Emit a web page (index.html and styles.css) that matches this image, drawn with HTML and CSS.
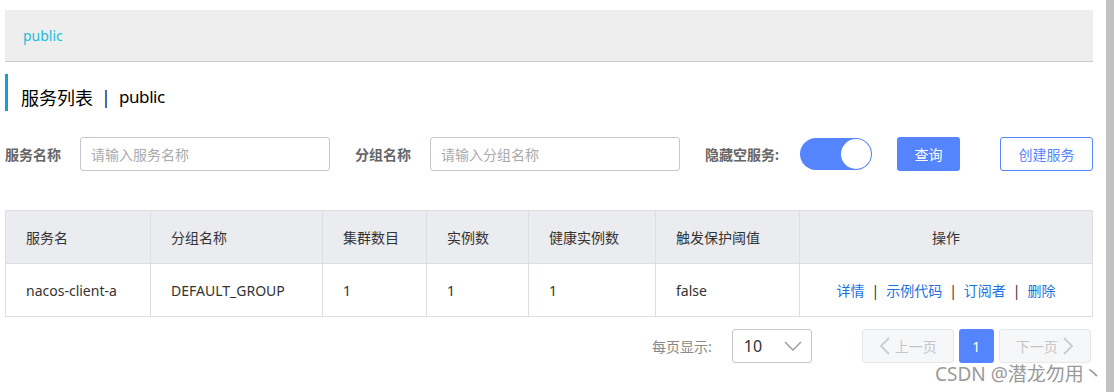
FILE: index.html
```html
<!DOCTYPE html>
<html lang="zh-CN">
<head>
    <meta charset="UTF-8">
    <title>服务列表</title>
    <link rel="stylesheet" href="styles.css">
</head>
<body>
    <div class="page">
        <!-- 命名空间 -->
        <div class="ns-bar">
            <span class="ns-name">public</span>
        </div>

        <h2 class="page-title">服务列表 <span class="sep">|</span> <span class="title-ns">public</span></h2>

        <!-- 查询条件 -->
        <div class="search-row">
            <label class="field-label">服务名称</label>
            <input class="text-input" type="text" placeholder="请输入服务名称">
            <label class="field-label">分组名称</label>
            <input class="text-input" type="text" placeholder="请输入分组名称">
            <label class="field-label switch-label">隐藏空服务:</label>
            <span class="switch"><span class="knob"></span></span>
            <button class="btn btn-primary">查询</button>
            <span class="spacer"></span>
            <button class="btn btn-outline">创建服务</button>
        </div>

        <!-- 服务表格 -->
        <table class="service-table">
            <thead>
                <tr>
                    <th class="c1">服务名</th>
                    <th class="c2">分组名称</th>
                    <th class="c3">集群数目</th>
                    <th class="c4">实例数</th>
                    <th class="c5">健康实例数</th>
                    <th class="c6">触发保护阈值</th>
                    <th class="c7 center">操作</th>
                </tr>
            </thead>
            <tbody>
                <tr>
                    <td>nacos-client-a</td>
                    <td>DEFAULT_GROUP</td>
                    <td>1</td>
                    <td>1</td>
                    <td>1</td>
                    <td>false</td>
                    <td class="center ops">
                        <a href="#">详情</a><span class="bar">|</span><a href="#">示例代码</a><span class="bar">|</span><a href="#">订阅者</a><span class="bar">|</span><a href="#">删除</a>
                    </td>
                </tr>
            </tbody>
        </table>

        <!-- 分页 -->
        <div class="pager">
            <span class="pager-label">每页显示:</span>
            <div class="page-size">
                <span>10</span>
                <svg width="18" height="11" viewBox="0 0 18 11"><path d="M1 1 L9 9 L17 1" fill="none" stroke="#999" stroke-width="1.4"/></svg>
            </div>
            <div class="pages">
                <button class="pg pg-wide" disabled>
                    <svg width="11" height="18" viewBox="0 0 11 18"><path d="M10 1 L2 9 L10 17" fill="none" stroke="#ccc" stroke-width="1.8"/></svg>
                    上一页
                </button>
                <button class="pg pg-current">1</button>
                <button class="pg pg-wide" disabled>
                    下一页
                    <svg width="11" height="18" viewBox="0 0 11 18"><path d="M1 1 L9 9 L1 17" fill="none" stroke="#ccc" stroke-width="1.8"/></svg>
                </button>
            </div>
        </div>

        <div class="watermark">CSDN @潜龙勿用丶</div>
    </div>

    <div class="scrollbar"></div>
</body>
</html>
```

FILE: styles.css
```css
body {
    margin: 0;
    padding: 0;
    font-family: "Noto Sans", "Noto Sans CJK SC", sans-serif;
    font-size: 14px;
    color: #333;
    background: #fff;
    overflow: hidden;
}

.page {
    width: 1088px;
    padding: 10px 0 0 5px;
}

.ns-bar {
    height: 51px;
    background: #eeeeee;
    border-bottom: 1px solid #cccccc;
    display: flex;
    align-items: center;
    padding-left: 18px;
}

.ns-name {
    color: #1fbcd8;
    font-size: 14px;
}

.page-title {
    margin: 12px 0 0 0;
    height: 37px;
    border-left: 3px solid #1a9bd3;
    padding-left: 13px;
    font-size: 18px;
    font-weight: normal;
    color: #000;
    display: flex;
    align-items: center;
    padding-top: 8px;
    box-sizing: border-box;
}

.page-title .sep {
    margin: 0 8px 0 8px;
    color: #222;
}

.title-ns {
    font-size: 17px;
    letter-spacing: -0.4px;
}

.search-row {
    margin-top: 26px;
    height: 34px;
    display: flex;
    align-items: center;
}

.field-label {
    font-weight: bold;
    color: #666;
    font-size: 14px;
    margin-right: 19px;
}

.switch-label {
    margin-right: 21px;
}

.text-input {
    width: 250px;
    height: 34px;
    box-sizing: border-box;
    border: 1px solid #c4c6cf;
    border-radius: 3px;
    padding: 0 10px;
    font-family: inherit;
    font-size: 14px;
    margin-right: 25px;
    outline: none;
}

.text-input::placeholder {
    color: #aaa;
}

.switch {
    width: 72px;
    height: 32px;
    border-radius: 16px;
    background: #5584ff;
    position: relative;
    margin-right: 25px;
}

.knob {
    position: absolute;
    right: 1px;
    top: 1px;
    width: 30px;
    height: 30px;
    border-radius: 50%;
    background: #fff;
}

.btn {
    height: 34px;
    border-radius: 3px;
    font-family: inherit;
    font-size: 14px;
    cursor: pointer;
    padding: 0;
}

.btn-primary {
    width: 63px;
    background: #5584ff;
    color: #fff;
    border: none;
}

.btn-outline {
    width: 93px;
    background: #fff;
    color: #5584ff;
    border: 1px solid #5584ff;
}

.spacer {
    flex: 1;
}

.service-table {
    margin-top: 39px;
    width: 1088px;
    border-collapse: collapse;
    border: 1px solid #dcdee3;
    table-layout: fixed;
}

.service-table th,
.service-table td {
    border: 1px solid #dcdee3;
    text-align: left;
    padding: 0 0 0 20px;
    font-size: 14px;
    color: #333;
}

.service-table th {
    background: #ebecf0;
    font-weight: normal;
    height: 52px;
}

.service-table td {
    height: 52px;
}

.service-table .center {
    text-align: center;
    padding: 0;
}

.c1 { width: 124px; }
.c2 { width: 151px; }
.c3 { width: 83px; }
.c4 { width: 81px; }
.c5 { width: 106px; }
.c6 { width: 123px; }

.ops a {
    color: #1a72e0;
    text-decoration: none;
}

.ops .bar {
    margin: 0 7px;
    color: #333;
}

.pager {
    margin-top: 12px;
    height: 34px;
    display: flex;
    align-items: center;
}

.pager-label {
    margin-left: 647px;
    color: #888;
    font-size: 14px;
}

.page-size {
    margin-left: 20px;
    width: 80px;
    height: 34px;
    box-sizing: border-box;
    border: 1px solid #c4c6cf;
    border-radius: 3px;
    display: flex;
    align-items: center;
    justify-content: space-between;
    padding: 0 9px 0 11px;
    font-size: 16px;
    color: #333;
}

.pages {
    margin-left: 50px;
    display: flex;
    gap: 5px;
}

.pg {
    height: 34px;
    border-radius: 3px;
    font-family: inherit;
    font-size: 14px;
    padding: 0;
    display: flex;
    align-items: center;
    justify-content: center;
    gap: 5px;
}

.pg-wide {
    width: 92px;
    background: #f6f7f9;
    border: 1px solid #e6e7eb;
    color: #c6c6c6;
}

.pg-current {
    width: 35px;
    background: #5584ff;
    border: none;
    color: #fff;
}

.watermark {
    margin: 0 0 0 930px;
    color: #9a9a9a;
    font-size: 19px;
    line-height: 22px;
    white-space: nowrap;
}

.scrollbar {
    position: absolute;
    top: 0;
    right: 0;
    width: 8px;
    bottom: 0;
    background: #c1c1c1;
}
```
